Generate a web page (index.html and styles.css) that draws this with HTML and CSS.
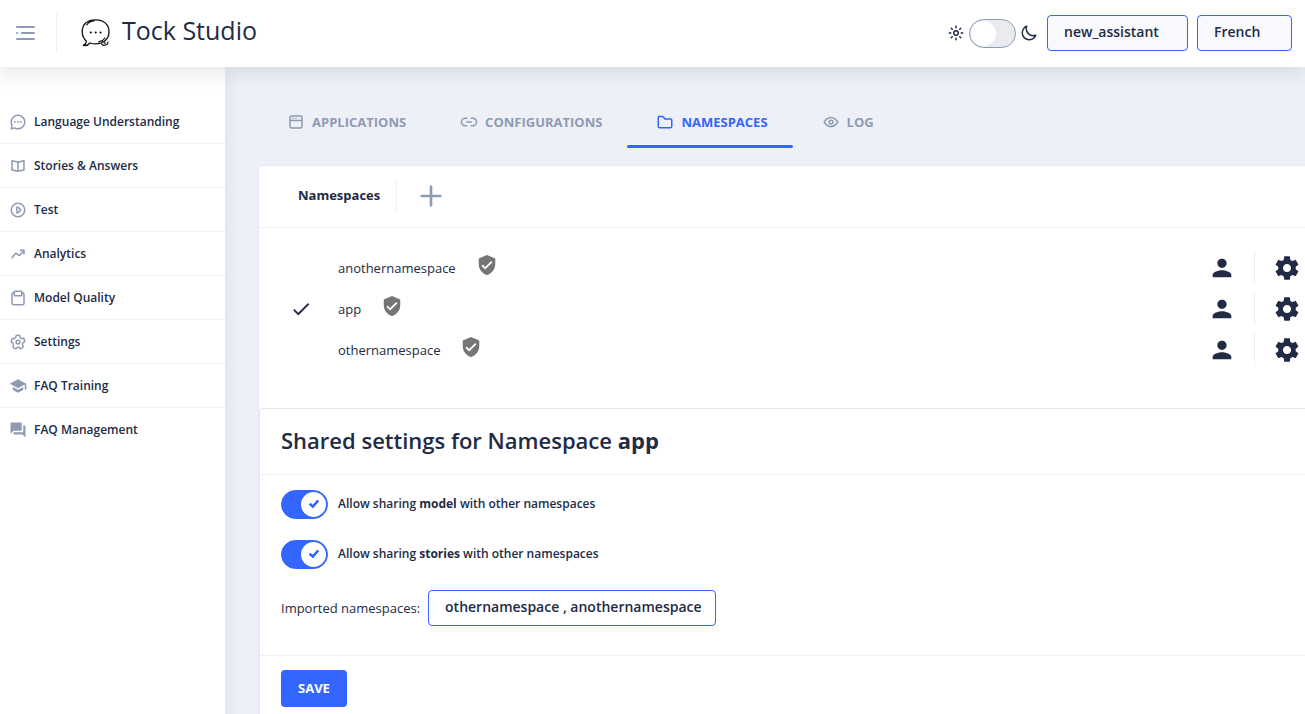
FILE: index.html
```html
<!DOCTYPE html>
<html lang="en">
<head>
<meta charset="utf-8">
<title>Tock Studio</title>
<link rel="stylesheet" href="styles.css">
</head>
<body>
<header class="header">
  <button class="icon-button menu-toggle" aria-label="Toggle menu">
    <svg class="icon-24" viewBox="0 0 24 24"><g fill="none" stroke="currentColor" stroke-width="2" stroke-linecap="round"><path d="M4 6h17M9 12h12M4 18h17M4 12h.1"/></g></svg>
  </button>
  <a class="brand" href="#">
    <svg class="logo" viewBox="0 0 30 30" fill="none" stroke="#111" stroke-width="1.300" stroke-linecap="round" stroke-linejoin="round"><path d="M5.500 23.200C2.500 20.600 1.200 17.500 1.200 13.800 1.200 6.500 6 1.800 14.500 1.800c8.500 0 13.500 4.900 13.500 11.900 0 3.600-1.300 6.700-4 9M5.500 23.200c-.2 2-1.200 3-3.200 4.200 3 .4 5.200-.5 6.700-2.400 4 1.300 7.500 1 10.700.2M5.800 6.800C8 3.900 10.500 3 13.500 2.700"/><path d="M24 20c-1.300 1.900-3.400 3.400-6.200 3.900M21.800 23.200c-2 1.500-1.200 4.300 1 4.100 2.200 0 4.200-1 4.200-3.200M24 22.800c-1.800.8-1.400 2.800.3 2.300" stroke-width="1.200"/><g fill="#111" stroke="none"><circle cx="9.800" cy="14.500" r="1.100"/><circle cx="14.700" cy="14.500" r="1.100"/><circle cx="19.600" cy="14.500" r="1.100"/></g></svg>
    <span>Tock Studio</span>
  </a>
  <div class="header-actions">
    <label class="theme">
      <svg class="icon-18" viewBox="0 0 24 24" fill="none" stroke="currentColor" stroke-width="2" stroke-linecap="round"><circle cx="12" cy="12" r="3"/><path d="M12 3v2M12 19v2M3 12h2M19 12h2M5.700 5.700l1.300 1.300M17 17l1.300 1.300M5.700 18.300 7 17M17 7l1.300-1.300"/></svg>
      <input type="checkbox" class="toggle" aria-label="Dark theme">
      <svg class="icon-18" viewBox="0 0 24 24"><path fill="currentColor" d="M12.300 22h-.1a10.310 10.310 0 0 1-7.340-3.150 10.460 10.460 0 0 1-.26-14 10.130 10.130 0 0 1 4-2.740 1 1 0 0 1 1.060.22 1 1 0 0 1 .24 1 8.400 8.400 0 0 0 1.940 8.810 8.470 8.470 0 0 0 8.830 1.940 1 1 0 0 1 1.270 1.290A10.160 10.160 0 0 1 19.600 19a10.280 10.280 0 0 1-7.300 3zM7.460 4.920a7.930 7.930 0 0 0-1.370 1.220 8.440 8.440 0 0 0 .2 11.320A8.290 8.290 0 0 0 12.220 20h.08a8.340 8.340 0 0 0 6.780-3.490A10.370 10.370 0 0 1 7.460 4.920z"/></svg>
    </label>
    <select class="select select-app" aria-label="Application"><option>new_assistant</option></select>
    <select class="select select-lang" aria-label="Language"><option>French</option></select>
  </div>
</header>
<div class="body">
  <nav class="sidebar">
    <a href="#"><svg class="icon-18" viewBox="0 0 24 24" fill="currentColor"><circle cx="12" cy="12" r="1.200"/><circle cx="16" cy="12" r="1.200"/><circle cx="8" cy="12" r="1.200"/><path d="M19.070 4.930a10 10 0 0 0-16.280 11 1.060 1.060 0 0 1 .09.64L2 20.800a1 1 0 0 0 .27.910A1 1 0 0 0 3 22h.2l4.280-.86a1.260 1.260 0 0 1 .64.090 10 10 0 0 0 11-16.280zm.83 8.360a8 8 0 0 1-11 6.080 3.260 3.260 0 0 0-1.250-.26 3.430 3.430 0 0 0-.56.050l-2.820.57.570-2.820a3.090 3.090 0 0 0-.21-1.810 8 8 0 0 1 6.080-11 8 8 0 0 1 9.190 9.190z"/></svg>Language Understanding</a>
    <a href="#"><svg class="icon-18" viewBox="0 0 24 24"><path fill="currentColor" d="M20.620 4.220a1 1 0 0 0-.84-.2L12 5.770 4.220 4A1 1 0 0 0 3 5v12.200a1 1 0 0 0 .78 1l8 1.800h.44l8-1.800a1 1 0 0 0 .78-1V5a1 1 0 0 0-.38-.78zM5 6.250l6 1.350v10.150L5 16.400zM19 16.400l-6 1.350V7.600l6-1.350z"/></svg>Stories &amp; Answers</a>
    <a href="#"><svg class="icon-18" viewBox="0 0 24 24" fill="currentColor"><path d="M12 2a10 10 0 1 0 10 10A10 10 0 0 0 12 2zm0 18a8 8 0 1 1 8-8 8 8 0 0 1-8 8z"/><path d="M12.340 7.450a1.700 1.700 0 0 0-1.850-.3 1.600 1.600 0 0 0-1 1.480v6.740a1.600 1.600 0 0 0 1 1.480 1.680 1.680 0 0 0 .69.150 1.740 1.740 0 0 0 1.160-.45L16 13.180a1.600 1.600 0 0 0 0-2.360zm-.84 7.150V9.400l2.810 2.600z"/></svg>Test</a>
    <a href="#"><svg class="icon-18" viewBox="0 0 24 24"><path fill="currentColor" d="M21 7a.78.780 0 0 0 0-.21.640.640 0 0 0-.05-.17 1.100 1.100 0 0 0-.09-.14.750.750 0 0 0-.14-.17l-.12-.07a.690.690 0 0 0-.19-.1h-.2A.700.700 0 0 0 20 6h-5a1 1 0 0 0 0 2h2.830l-4 4.710-4.320-2.570a1 1 0 0 0-1.280.22l-5 6a1 1 0 0 0 .13 1.410A1 1 0 0 0 4 18a1 1 0 0 0 .77-.36l4.450-5.340 4.270 2.560a1 1 0 0 0 1.270-.21L19 9.700V12a1 1 0 0 0 2 0V7z"/></svg>Analytics</a>
    <a href="#"><svg class="icon-18" viewBox="0 0 24 24"><path fill="currentColor" d="M18 4v-.17A1.840 1.840 0 0 0 16.150 2h-8.300A1.840 1.840 0 0 0 6 3.830V4a3 3 0 0 0-3 3v12a3 3 0 0 0 3 3h12a3 3 0 0 0 3-3V7a3 3 0 0 0-3-3zM8 4h8v4H8zm11 15a1 1 0 0 1-1 1H6a1 1 0 0 1-1-1V7a1 1 0 0 1 1-1v2.170A1.840 1.840 0 0 0 7.850 10h8.300A1.840 1.840 0 0 0 18 8.170V6a1 1 0 0 1 1 1z"/></svg>Model Quality</a>
    <a href="#"><svg class="icon-18" viewBox="0 0 24 24" fill="currentColor"><path d="M8.610 22a2.250 2.250 0 0 1-1.350-.46L5.190 20a2.370 2.370 0 0 1-.49-3.220 2.060 2.060 0 0 0 .23-1.860l-.06-.16a1.830 1.830 0 0 0-1.120-1.220h-.16a2.340 2.340 0 0 1-1.480-2.940L2.930 8a2.180 2.180 0 0 1 1.120-1.410 2.140 2.140 0 0 1 1.680-.12 1.930 1.930 0 0 0 1.780-.29l.13-.1a1.940 1.940 0 0 0 .73-1.510v-.24A2.320 2.320 0 0 1 10.660 2h2.550a2.260 2.260 0 0 1 1.600.67 2.370 2.370 0 0 1 .68 1.680v.28a1.760 1.760 0 0 0 .69 1.430l.11.080a1.740 1.740 0 0 0 1.590.26l.34-.11A2.260 2.260 0 0 1 21.100 7.800l.79 2.520a2.360 2.360 0 0 1-1.460 2.930l-.2.070A1.890 1.890 0 0 0 19 14.600a2 2 0 0 0 .25 1.650l.26.380a2.380 2.380 0 0 1-.5 3.230L17 21.410a2.240 2.240 0 0 1-3.220-.53l-.12-.17a1.750 1.750 0 0 0-1.500-.78 1.800 1.800 0 0 0-1.430.77l-.23.330A2.250 2.250 0 0 1 9 22a2 2 0 0 1-.39 0zM4.400 11.620a3.830 3.830 0 0 1 2.380 2.500v.12a4 4 0 0 1-.46 3.620.380.380 0 0 0 0 .510L8.470 20a.250.250 0 0 0 .37-.07l.23-.33a3.770 3.770 0 0 1 6.200 0l.12.180a.300.300 0 0 0 .18.120.250.250 0 0 0 .19-.05l2.060-1.560a.360.360 0 0 0 .07-.49l-.26-.38A4 4 0 0 1 17.100 14a3.920 3.920 0 0 1 2.490-2.610l.2-.07a.340.340 0 0 0 .19-.44l-.78-2.490a.350.350 0 0 0-.2-.19.210.210 0 0 0-.19 0l-.34.110a3.740 3.740 0 0 1-3.430-.57L15 7.650a3.760 3.760 0 0 1-1.490-3v-.31a.370.370 0 0 0-.1-.26.310.310 0 0 0-.21-.08h-2.540a.310.310 0 0 0-.29.330v.250a3.900 3.900 0 0 1-1.520 3.090l-.13.100a3.910 3.910 0 0 1-3.630.59.220.220 0 0 0-.14 0 .280.280 0 0 0-.12.150L4 11.120a.360.360 0 0 0 .22.450z"/><path d="M12 15.500a3.500 3.500 0 1 1 3.500-3.500 3.500 3.500 0 0 1-3.500 3.500zm0-5a1.500 1.500 0 1 0 1.500 1.500 1.500 1.500 0 0 0-1.500-1.500z"/></svg>Settings</a>
    <a href="#"><svg class="icon-18" viewBox="0 0 24 24"><path fill="currentColor" d="M5 13.180v4L12 21l7-3.820v-4L12 17l-7-3.820zM12 3L1 9l11 6 9-4.910V17h2V9L12 3z"/></svg>FAQ Training</a>
    <a href="#"><svg class="icon-18" viewBox="0 0 24 24"><path fill="currentColor" d="M21 6h-2v9H6v2c0 .55.45 1 1 1h11l4 4V7c0-.55-.45-1-1-1zm-4 6V3c0-.55-.45-1-1-1H3c-.55 0-1 .45-1 1v14l4-4h10c.55 0 1-.45 1-1z"/></svg>FAQ Management</a>
  </nav>
  <main class="content">
    <nav class="tabs">
      <a href="#"><svg class="icon-18" viewBox="0 0 24 24" fill="currentColor"><path d="M18 3H6a3 3 0 0 0-3 3v12a3 3 0 0 0 3 3h12a3 3 0 0 0 3-3V6a3 3 0 0 0-3-3zM6 5h12a1 1 0 0 1 1 1v3H5V6a1 1 0 0 1 1-1zm12 14H6a1 1 0 0 1-1-1v-7h14v7a1 1 0 0 1-1 1z"/><circle cx="8" cy="7.030" r="1"/><circle cx="12" cy="7.030" r="1"/></svg>APPLICATIONS</a>
      <a href="#"><svg class="icon-18" viewBox="0 0 24 24" fill="currentColor"><path d="M8 12a1 1 0 0 0 1 1h6a1 1 0 0 0 0-2H9a1 1 0 0 0-1 1z"/><path d="M9 16H7.210A4.130 4.130 0 0 1 3 12.370 4 4 0 0 1 7 8h2a1 1 0 0 0 0-2H7.210a6.150 6.150 0 0 0-6.160 5.210A6 6 0 0 0 7 18h2a1 1 0 0 0 0-2zM23 11.240A6.160 6.160 0 0 0 16.760 6h-1.510C14.440 6 14 6.450 14 7a1 1 0 0 0 1 1h1.790A4.130 4.130 0 0 1 21 11.630 4 4 0 0 1 17 16h-2a1 1 0 0 0 0 2h2a6 6 0 0 0 6-6.760z"/></svg>CONFIGURATIONS</a>
      <a href="#" class="active" aria-current="page"><svg class="icon-18" viewBox="0 0 24 24"><path fill="currentColor" d="M19.500 20.500h-15A2.470 2.470 0 0 1 2 18.070V5.930A2.470 2.470 0 0 1 4.500 3.500h4.600a1 1 0 0 1 .77.370l2.600 3.180h7A2.470 2.470 0 0 1 22 9.480v8.590a2.470 2.470 0 0 1-2.500 2.430zM4 13.760v4.310a.460.460 0 0 0 .5.430h15a.460.460 0 0 0 .5-.43V9.480a.460.460 0 0 0-.5-.43H12a1 1 0 0 1-.77-.37L8.630 5.500H4.500a.460.460 0 0 0-.5.430z"/></svg>NAMESPACES</a>
      <a href="#"><svg class="icon-18" viewBox="0 0 24 24" fill="currentColor"><path d="M21.870 11.500c-.64-1.110-4.160-6.680-10.140-6.500-5.530.14-8.730 5-9.600 6.500a1 1 0 0 0 0 1c.63 1.090 4 6.500 9.890 6.500h.25c5.530-.14 8.740-5 9.600-6.500a1 1 0 0 0 0-1zM12.220 17c-4.310.1-7.120-3.590-8-5 1-1.610 3.610-4.900 7.610-5 4.290-.11 7.110 3.590 8 5-1.030 1.610-3.610 4.900-7.610 5z"/><path d="M12 8.500a3.500 3.500 0 1 0 3.500 3.500A3.500 3.500 0 0 0 12 8.500zm0 5a1.500 1.500 0 1 1 1.500-1.500 1.500 1.500 0 0 1-1.500 1.500z"/></svg>LOG</a>
    </nav>
    <section class="card">
      <div class="card-title">
        <h2>Namespaces</h2>
        <button class="icon-button add" aria-label="Add namespace"><svg class="icon-32" viewBox="0 0 24 24"><path fill="currentColor" d="M19 11h-6V5a1 1 0 0 0-2 0v6H5a1 1 0 0 0 0 2h6v6a1 1 0 0 0 2 0v-6h6a1 1 0 0 0 0-2z"/></svg></button>
      </div>
      <ul class="namespaces">
        <li>
          <span class="current"></span><span class="name">anothernamespace</span>
          <svg class="shield" viewBox="0 0 24 24"><path d="M12 1L3 5v6c0 5.550 3.840 10.740 9 12 5.160-1.260 9-6.450 9-12V5l-9-4zm-2 16l-4-4 1.410-1.410L10 14.170l6.590-6.590L18 9l-8 8z"/></svg>
          <button class="icon-button user" aria-label="Users"><svg class="icon-28" viewBox="0 0 24 24"><path fill="currentColor" d="M12 12c2.210 0 4-1.790 4-4s-1.790-4-4-4-4 1.790-4 4 1.790 4 4 4zm0 2c-2.670 0-8 1.340-8 4v2h16v-2c0-2.660-5.330-4-8-4z"/></svg></button>
          <button class="icon-button gear" aria-label="Settings"><svg class="icon-28" viewBox="0 0 24 24"><path fill="currentColor" d="M19.430 12.980c.04-.32.07-.64.07-.98s-.03-.66-.07-.98l2.110-1.650c.19-.15.24-.42.12-.64l-2-3.460c-.12-.22-.39-.3-.61-.22l-2.490 1c-.52-.4-1.080-.73-1.690-.98l-.38-2.650C14.460 2.180 14.250 2 14 2h-4c-.25 0-.46.18-.49.42l-.38 2.650c-.61.25-1.170.59-1.690.98l-2.490-1c-.23-.09-.49 0-.61.22l-2 3.460c-.13.22-.07.49.12.64l2.110 1.650c-.04.32-.07.65-.07.98s.03.66.07.98l-2.110 1.650c-.19.15-.24.42-.12.64l2 3.460c.12.22.39.3.61.22l2.490-1c.52.4 1.080.73 1.690.98l.38 2.650c.03.24.24.42.49.42h4c.25 0 .46-.18.49-.42l.38-2.650c.61-.25 1.170-.59 1.690-.98l2.490 1c.23.09.49 0 .61-.22l2-3.460c.12-.22.07-.49-.12-.64l-2.110-1.650zM12 15.500c-1.930 0-3.500-1.570-3.500-3.500s1.570-3.500 3.500-3.500 3.500 1.570 3.500 3.500-1.570 3.500-3.500 3.500z"/></svg></button>
        </li>
        <li>
          <span class="current"><svg class="icon-22" viewBox="0 0 24 24"><path fill="currentColor" d="M9 16.170 4.830 12l-1.420 1.410L9 19 21 7l-1.410-1.410z"/></svg></span><span class="name">app</span>
          <svg class="shield" viewBox="0 0 24 24"><path d="M12 1L3 5v6c0 5.550 3.840 10.740 9 12 5.160-1.260 9-6.450 9-12V5l-9-4zm-2 16l-4-4 1.410-1.410L10 14.170l6.590-6.590L18 9l-8 8z"/></svg>
          <button class="icon-button user" aria-label="Users"><svg class="icon-28" viewBox="0 0 24 24"><path fill="currentColor" d="M12 12c2.210 0 4-1.790 4-4s-1.790-4-4-4-4 1.790-4 4 1.790 4 4 4zm0 2c-2.670 0-8 1.340-8 4v2h16v-2c0-2.660-5.330-4-8-4z"/></svg></button>
          <button class="icon-button gear" aria-label="Settings"><svg class="icon-28" viewBox="0 0 24 24"><path fill="currentColor" d="M19.430 12.980c.04-.32.07-.64.07-.98s-.03-.66-.07-.98l2.110-1.650c.19-.15.24-.42.12-.64l-2-3.460c-.12-.22-.39-.3-.61-.22l-2.490 1c-.52-.4-1.080-.73-1.690-.98l-.38-2.650C14.460 2.180 14.250 2 14 2h-4c-.25 0-.46.18-.49.42l-.38 2.650c-.61.25-1.170.59-1.690.98l-2.490-1c-.23-.09-.49 0-.61.22l-2 3.460c-.13.22-.07.49.12.64l2.110 1.650c-.04.32-.07.65-.07.98s.03.66.07.98l-2.110 1.650c-.19.15-.24.42-.12.64l2 3.460c.12.22.39.3.61.22l2.490-1c.52.4 1.080.73 1.690.98l.38 2.650c.03.24.24.42.49.42h4c.25 0 .46-.18.49-.42l.38-2.650c.61-.25 1.170-.59 1.690-.98l2.490 1c.23.09.49 0 .61-.22l2-3.460c.12-.22.07-.49-.12-.64l-2.110-1.650zM12 15.500c-1.930 0-3.500-1.570-3.500-3.500s1.570-3.500 3.500-3.500 3.500 1.570 3.500 3.500-1.570 3.500-3.500 3.500z"/></svg></button>
        </li>
        <li>
          <span class="current"></span><span class="name">othernamespace</span>
          <svg class="shield" viewBox="0 0 24 24"><path d="M12 1L3 5v6c0 5.550 3.840 10.740 9 12 5.160-1.260 9-6.450 9-12V5l-9-4zm-2 16l-4-4 1.410-1.410L10 14.170l6.590-6.590L18 9l-8 8z"/></svg>
          <button class="icon-button user" aria-label="Users"><svg class="icon-28" viewBox="0 0 24 24"><path fill="currentColor" d="M12 12c2.210 0 4-1.790 4-4s-1.790-4-4-4-4 1.790-4 4 1.790 4 4 4zm0 2c-2.670 0-8 1.340-8 4v2h16v-2c0-2.660-5.330-4-8-4z"/></svg></button>
          <button class="icon-button gear" aria-label="Settings"><svg class="icon-28" viewBox="0 0 24 24"><path fill="currentColor" d="M19.430 12.980c.04-.32.07-.64.07-.98s-.03-.66-.07-.98l2.110-1.650c.19-.15.24-.42.12-.64l-2-3.460c-.12-.22-.39-.3-.61-.22l-2.490 1c-.52-.4-1.080-.73-1.690-.98l-.38-2.650C14.460 2.180 14.250 2 14 2h-4c-.25 0-.46.18-.49.42l-.38 2.650c-.61.25-1.170.59-1.690.98l-2.490-1c-.23-.09-.49 0-.61.22l-2 3.460c-.13.22-.07.49.12.64l2.110 1.650c-.04.32-.07.65-.07.98s.03.66.07.98l-2.110 1.650c-.19.15-.24.42-.12.64l2 3.460c.12.22.39.3.61.22l2.490-1c.52.4 1.080.73 1.690.98l.38 2.650c.03.24.24.42.49.42h4c.25 0 .46-.18.49-.42l.38-2.650c.61-.25 1.170-.59 1.690-.98l2.490 1c.23.09.49 0 .61-.22l2-3.460c.12-.22.07-.49-.12-.64l-2.110-1.650zM12 15.500c-1.930 0-3.500-1.570-3.500-3.500s1.570-3.500 3.500-3.500 3.500 1.570 3.500 3.500-1.570 3.500-3.500 3.500z"/></svg></button>
        </li>
      </ul>
      <form class="settings">
        <h3>Shared settings for Namespace <b>app</b></h3>
        <div class="fields">
          <label class="switch"><input type="checkbox" class="toggle" checked><span>Allow sharing <b>model</b> with other namespaces</span></label>
          <label class="switch"><input type="checkbox" class="toggle" checked><span>Allow sharing <b>stories</b> with other namespaces</span></label>
          <div class="import">
            <label for="imported">Imported namespaces:</label>
            <select id="imported" class="select select-import"><option>othernamespace , anothernamespace</option></select>
          </div>
        </div>
        <footer><button type="button" class="save">SAVE</button></footer>
      </form>
    </section>
  </main>
</div>
</body>
</html>
```
FILE: styles.css
```css
* { box-sizing: border-box; }
body {
  margin: 0;
  min-height: 100vh;
  display: flex;
  flex-direction: column;
  overflow: hidden;
  background: #edf1f7;
  color: #222b45;
  font: 400 13px/20px "Open Sans", sans-serif;
}
a { color: inherit; text-decoration: none; }
h2, h3, ul { margin: 0; padding: 0; }
svg { display: block; flex: none; }
b { font-weight: 700; }
.icon-18 { width: 18px; height: 18px; }
.icon-22 { width: 22px; height: 22px; }
.icon-24 { width: 24px; height: 24px; }
.icon-28 { width: 28px; height: 28px; }
.icon-32 { width: 32px; height: 32px; }
.icon-button {
  display: flex;
  align-items: center;
  justify-content: center;
  padding: 0;
  border: 0;
  background: none;
  color: #8f9bb3;
}

.header {
  position: relative;
  z-index: 1;
  display: flex;
  align-items: center;
  height: 67px;
  padding: 0 13px 1px 0;
  background: #fff;
  box-shadow: 0 8px 16px rgba(44, 51, 73, 0.1);
}
.menu-toggle {
  width: 57px;
  height: 40px;
  padding: 0 6px 1px 0;
  border-right: 1px solid #edf1f7;
}
.brand {
  display: flex;
  align-items: center;
  gap: 11px;
  margin-left: 24px;
  font-size: 25px;
  line-height: 32px;
}
.brand span { padding-bottom: 6px; }
.logo { width: 30px; height: 30px; }
.header-actions { display: flex; gap: 9px; margin-left: auto; }
.theme { display: flex; align-items: center; gap: 4px; }

.select {
  appearance: none;
  height: 36px;
  padding: 0 8px 2px 16px;
  border: 1px solid #3366ff;
  border-radius: 4px;
  background: #fff;
  color: #222b45;
  font: 600 14px/20px "Open Sans", sans-serif;
}
.header .select { background: #f7f9fc; }
.select-app { width: 141px; }
.select-lang { width: 95px; }
.select-import { width: 288px; }

.toggle {
  appearance: none;
  position: relative;
  flex: none;
  width: 47px;
  height: 29px;
  margin: 0;
  border: 1px solid #8f9bb3;
  border-radius: 15px;
  background: rgba(143, 155, 179, 0.2);
}
.toggle::before {
  content: "";
  position: absolute;
  top: 1px;
  left: 1px;
  width: 25px;
  height: 25px;
  border-radius: 50%;
  background: #fff;
}
.toggle:checked { border-color: #3366ff; background: #3366ff; }
.toggle:checked::before { left: 19px; }
.toggle:checked::after {
  content: "";
  position: absolute;
  top: 7px;
  left: 29px;
  width: 3px;
  height: 7px;
  border: solid #3366ff;
  border-width: 0 3px 3px 0;
  border-radius: 1px;
  transform: rotate(42deg);
}

.body { display: flex; flex: 1; }
.sidebar {
  flex: none;
  width: 225px;
  padding-top: 33px;
  background: #fff;
  box-shadow: 0 8px 16px rgba(44, 51, 73, 0.1);
  font-size: 12px;
  font-weight: 600;
}
.sidebar a {
  display: flex;
  align-items: center;
  gap: 7px;
  height: 44px;
  padding-left: 9px;
  border-bottom: 1px solid #edf1f7;
}
.sidebar a:last-child { border-bottom: 0; }
.sidebar svg { color: #8f9bb3; }

.content { flex: 1; min-width: 0; padding: 30px 0 0 33px; }
.tabs {
  display: flex;
  height: 51px;
  margin-bottom: 17px;
  color: #8f9bb3;
  font-weight: 700;
}
.tabs a {
  display: flex;
  align-items: center;
  gap: 7px;
  padding: 2px 25px 0 29px;
  border-bottom: 3px solid transparent;
}
.tabs .active { position: relative; color: #3366ff; }
.tabs .active::after {
  content: "";
  position: absolute;
  inset: auto 0 -3px;
  height: 3px;
  border-radius: 2px;
  background: #3366ff;
}

.card {
  border: solid #e4e9f2;
  border-width: 1px 0 0 1px;
  border-radius: 4px 0 0;
  background: #fff;
}
.card-title {
  display: flex;
  align-items: center;
  height: 62px;
  padding: 0 0 2px 39px;
  border-bottom: 1px solid #edf1f7;
}
.card-title h2 { padding-bottom: 2px; font-size: 13px; font-weight: 700; }
.add {
  height: 32px;
  margin-left: 16px;
  padding-left: 18px;
  border-left: 1px solid #edf1f7;
}
.namespaces {
  display: grid;
  gap: 8px;
  padding: 23px 4px 42px 31px;
  list-style: none;
}
.namespaces li { display: flex; align-items: center; height: 33px; }
.current { width: 48px; }
.shield {
  width: 22px;
  height: 22px;
  margin: 0 auto 6px 20px;
  fill: #757575;
}
.namespaces .icon-button { height: 33px; color: #222b45; }
.user { width: 46px; padding-right: 18px; }
.gear {
  width: 47px;
  padding-left: 18px;
  border-left: 1px solid #edf1f7;
}

.settings {
  border: solid #e4e9f2;
  border-width: 1px 0 0 1px;
  border-radius: 4px 0 0;
}
.settings h3 {
  padding: 15px 21px 18px;
  border-bottom: 1px solid #edf1f7;
  font-size: 22px;
  font-weight: 600;
  line-height: 32px;
}
.fields {
  display: grid;
  gap: 21px;
  padding: 15px 21px 29px;
}
.switch {
  display: flex;
  align-items: center;
  gap: 10px;
  font-size: 12px;
  font-weight: 600;
}
.switch span { padding-bottom: 2px; }
.import { display: flex; align-items: center; gap: 8px; }
.settings footer { padding: 14px 21px 24px; border-top: 1px solid #edf1f7; }
.save {
  height: 37px;
  padding: 0 17px 2px;
  border: 0;
  border-radius: 4px;
  background: #3366ff;
  color: #fff;
  font: 700 13px/16px "Open Sans", sans-serif;
}
```
